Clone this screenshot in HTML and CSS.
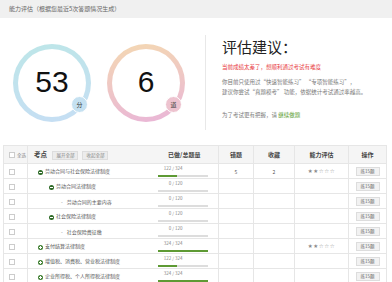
FILE: index.html
```html
<!DOCTYPE html>
<html lang="zh-CN">
<head>
    <meta charset="UTF-8">
    <title>能力评估</title>
    <link rel="stylesheet" href="styles.css">
</head>
<body>
    <div class="topbar">能力评估（根据您最近5次答题情况生成）</div>

    <div class="summary">
        <div class="scores">
            <div class="ring ring-blue">
                <span class="ring-num">53</span>
                <span class="ring-badge">分</span>
            </div>
            <div class="ring ring-pink">
                <span class="ring-num">6</span>
                <span class="ring-badge">道</span>
            </div>
        </div>
        <div class="advice">
            <h2>评估建议：</h2>
            <p class="warn">当前成绩太差了，想顺利通过考试有难度</p>
            <p class="tips">你目前只使用过“快速智能练习” “专项智能练习”，<br>建议你尝试“真题模考” 功能，依据统计考试通过率越高。</p>
            <p class="tips">为了考试更有把握，请 <a href="#">继续做题</a></p>
        </div>
    </div>

    <table class="points">
        <colgroup>
            <col style="width:24px">
            <col style="width:123px">
            <col style="width:68px">
            <col style="width:35px">
            <col style="width:41px">
            <col style="width:54px">
            <col style="width:38px">
        </colgroup>
        <thead>
            <tr>
                <th class="c-check"><span class="cb"></span><span class="all">全选</span></th>
                <th class="c-name">考点 <span class="mini">展开全部</span><span class="mini">收起全部</span></th>
                <th>已做/总题量</th>
                <th>错题</th>
                <th>收藏</th>
                <th>能力评估</th>
                <th>操作</th>
            </tr>
        </thead>
        <tbody>
            <tr>
                <td class="c-check"><span class="cb"></span></td>
                <td class="c-name lv1"><span class="tg minus"></span>劳动合同与社会保险法律制度</td>
                <td class="prog"><div class="prog-box"><div class="prog-txt">122 / 324</div><div class="bar"><i style="width:38%"></i></div></div></td>
                <td>5</td>
                <td>2</td>
                <td class="stars">★★☆☆☆</td>
                <td><span class="btn">练15题</span></td>
            </tr>
            <tr>
                <td class="c-check"><span class="cb"></span></td>
                <td class="c-name lv2"><span class="tg minus"></span>劳动合同法律制度</td>
                <td class="prog"><div class="prog-box"><div class="prog-txt">0 / 120</div><div class="bar"><i style="width:0%"></i></div></div></td>
                <td></td>
                <td></td>
                <td></td>
                <td><span class="btn">练15题</span></td>
            </tr>
            <tr>
                <td class="c-check"><span class="cb"></span></td>
                <td class="c-name lv3"><span class="dash">-</span>劳动合同的主要内容</td>
                <td class="prog"><div class="prog-box"><div class="prog-txt">0 / 120</div><div class="bar"><i style="width:0%"></i></div></div></td>
                <td></td>
                <td></td>
                <td></td>
                <td><span class="btn">练15题</span></td>
            </tr>
            <tr>
                <td class="c-check"><span class="cb"></span></td>
                <td class="c-name lv2"><span class="tg minus"></span>社会保险法律制度</td>
                <td class="prog"><div class="prog-box"><div class="prog-txt">0 / 120</div><div class="bar"><i style="width:0%"></i></div></div></td>
                <td></td>
                <td></td>
                <td></td>
                <td><span class="btn">练15题</span></td>
            </tr>
            <tr>
                <td class="c-check"><span class="cb"></span></td>
                <td class="c-name lv3"><span class="dash">-</span>社会保险费征缴</td>
                <td class="prog"><div class="prog-box"><div class="prog-txt">0 / 120</div><div class="bar"><i style="width:0%"></i></div></div></td>
                <td></td>
                <td></td>
                <td></td>
                <td><span class="btn">练15题</span></td>
            </tr>
            <tr>
                <td class="c-check"><span class="cb"></span></td>
                <td class="c-name lv1"><span class="tg plus"></span>支付结算法律制度</td>
                <td class="prog"><div class="prog-box"><div class="prog-txt">324 / 324</div><div class="bar"><i style="width:100%"></i></div></div></td>
                <td></td>
                <td></td>
                <td class="stars">★★☆☆☆</td>
                <td><span class="btn">练15题</span></td>
            </tr>
            <tr>
                <td class="c-check"><span class="cb"></span></td>
                <td class="c-name lv1"><span class="tg plus"></span>增值税、消费税、营业税法律制度</td>
                <td class="prog"><div class="prog-box"><div class="prog-txt">122 / 324</div><div class="bar"><i style="width:38%"></i></div></div></td>
                <td></td>
                <td></td>
                <td></td>
                <td><span class="btn">练15题</span></td>
            </tr>
            <tr>
                <td class="c-check"><span class="cb"></span></td>
                <td class="c-name lv1"><span class="tg plus"></span>企业所得税、个人所得税法律制度</td>
                <td class="prog"><div class="prog-box"><div class="prog-txt">324 / 324</div><div class="bar"><i style="width:100%"></i></div></div></td>
                <td></td>
                <td></td>
                <td></td>
                <td><span class="btn">练15题</span></td>
            </tr>
        </tbody>
    </table>
</body>
</html>
```

FILE: styles.css
```css
body, html {
    margin: 0;
    padding: 0;
    background-color: #fff;
    font-family: "Noto Sans CJK SC", "Liberation Sans", sans-serif;
    color: #333;
    overflow: hidden;
}
.topbar {
    height: 18px;
    line-height: 18px;
    padding-left: 9px;
    background-color: #f0f0f0;
    font-size: 6px;
    color: #666;
}
.summary {
    display: flex;
    padding: 17px 0 15px;
}
.scores {
    width: 192px;
    height: 95px;
    padding-left: 13px;
    display: flex;
    align-items: center;
    gap: 16px;
    border-right: 1px solid #e8e8e8;
}
.ring {
    position: relative;
    width: 68px;
    height: 68px;
    border: 5px solid transparent;
    border-radius: 50%;
    display: flex;
    justify-content: center;
    align-items: center;
}
.ring-blue {
    background: linear-gradient(#fff, #fff) padding-box,
                linear-gradient(170deg, #bde6e8, #c6def4) border-box;
}
.ring-pink {
    background: linear-gradient(#fff, #fff) padding-box,
                linear-gradient(170deg, #f4d8b2, #e9b5d8) border-box;
}
.ring-num {
    font-family: "Liberation Sans", Arial, sans-serif;
    font-size: 30px;
    color: #111;
    line-height: 1;
    margin-top: -1px;
}
.ring-badge {
    position: absolute;
    left: 53px;
    top: 47px;
    width: 15px;
    height: 15px;
    border-radius: 50%;
    border: 1px solid #fff;
    font-size: 6px;
    color: #333;
    display: flex;
    justify-content: center;
    align-items: center;
}
.ring-blue .ring-badge {
    background-color: #c5e1f1;
}
.ring-pink .ring-badge {
    background-color: #edc3cf;
}
.advice {
    padding: 3px 0 0 16px;
}
.advice h2 {
    margin: 0 0 7px;
    font-size: 15px;
    font-weight: normal;
    line-height: 17px;
    color: #222;
}
.advice p {
    margin: 0;
    font-size: 5.5px;
    line-height: 10px;
    color: #777;
}
.advice .warn {
    color: #e8383d;
    margin-bottom: 5px;
}
.advice .tips + .tips {
    margin-top: 13px;
}
.advice a {
    color: #5a9c2e;
    text-decoration: none;
}
.points {
    margin-left: 3px;
    width: 383px;
    border-collapse: collapse;
    table-layout: fixed;
}
.points th, .points td {
    border: 1px solid #e6e6e6;
    padding: 0;
    text-align: center;
    vertical-align: middle;
    white-space: nowrap;
    overflow: hidden;
}
.points th {
    height: 17px;
    background-color: #f5f5f5;
    font-size: 6px;
    font-weight: bold;
    color: #444;
}
.points td {
    height: 14px;
    font-size: 5px;
    line-height: 7px;
    color: #555;
}
.points td.c-name, .points th.c-name {
    text-align: left;
    border-right: none;
}
.points td.prog, .points th:nth-child(3) {
    border-left: none;
}
.points th.c-name {
    padding-left: 6px;
    font-size: 6.5px;
}
.c-check .cb {
    display: inline-block;
    width: 4px;
    height: 4px;
    border: 1px solid #ccc;
    background: #fff;
    vertical-align: middle;
}
.points .c-check {
    text-align: left;
    padding-left: 5px;
}
th.c-check .all {
    font-size: 4.5px;
    font-weight: normal;
    color: #888;
    margin-left: 2px;
    vertical-align: middle;
}
.mini {
    display: inline-block;
    margin-left: 4px;
    padding: 0 3px;
    height: 7px;
    line-height: 7px;
    font-size: 4.5px;
    font-weight: normal;
    color: #888;
    background-color: #ececec;
    border: 1px solid #ddd;
    vertical-align: middle;
}
.points .lv1 {
    padding-left: 10px;
}
.points .lv2 {
    padding-left: 21px;
}
.points .lv3 {
    padding-left: 33px;
}
.tg {
    position: relative;
    display: inline-block;
    width: 5px;
    height: 5px;
    border-radius: 50%;
    background-color: #2e6a27;
    margin-right: 2px;
    vertical-align: middle;
}
.tg::before, .tg.plus::after {
    content: "";
    position: absolute;
    left: 1px;
    top: 2px;
    width: 3px;
    height: 1px;
    background: #fff;
}
.tg.plus::after {
    left: 2px;
    top: 1px;
    width: 1px;
    height: 3px;
}
.tg.plus {
    background-color: #3f7f31;
}
.dash {
    color: #777;
    margin-right: 4px;
}
.prog-box {
    width: 50px;
    margin-left: 7px;
}
.prog-txt {
    padding-right: 25px;
    text-align: right;
    line-height: 7px;
    font-size: 4.5px;
    color: #888;
}
.bar {
    margin-top: 3px;
    height: 2px;
    background-color: #ddd;
}
.bar i {
    display: block;
    height: 100%;
    background-color: #5e9a34;
}
.points .stars {
    font-family: "DejaVu Sans", sans-serif;
    font-size: 5.5px;
    letter-spacing: 0.6px;
    color: #888;
}
.btn {
    display: inline-block;
    padding: 0 4px;
    height: 7px;
    line-height: 7px;
    font-size: 4.5px;
    color: #666;
    background-color: #f2f2f2;
    border: 1px solid #ddd;
    vertical-align: middle;
}
```
